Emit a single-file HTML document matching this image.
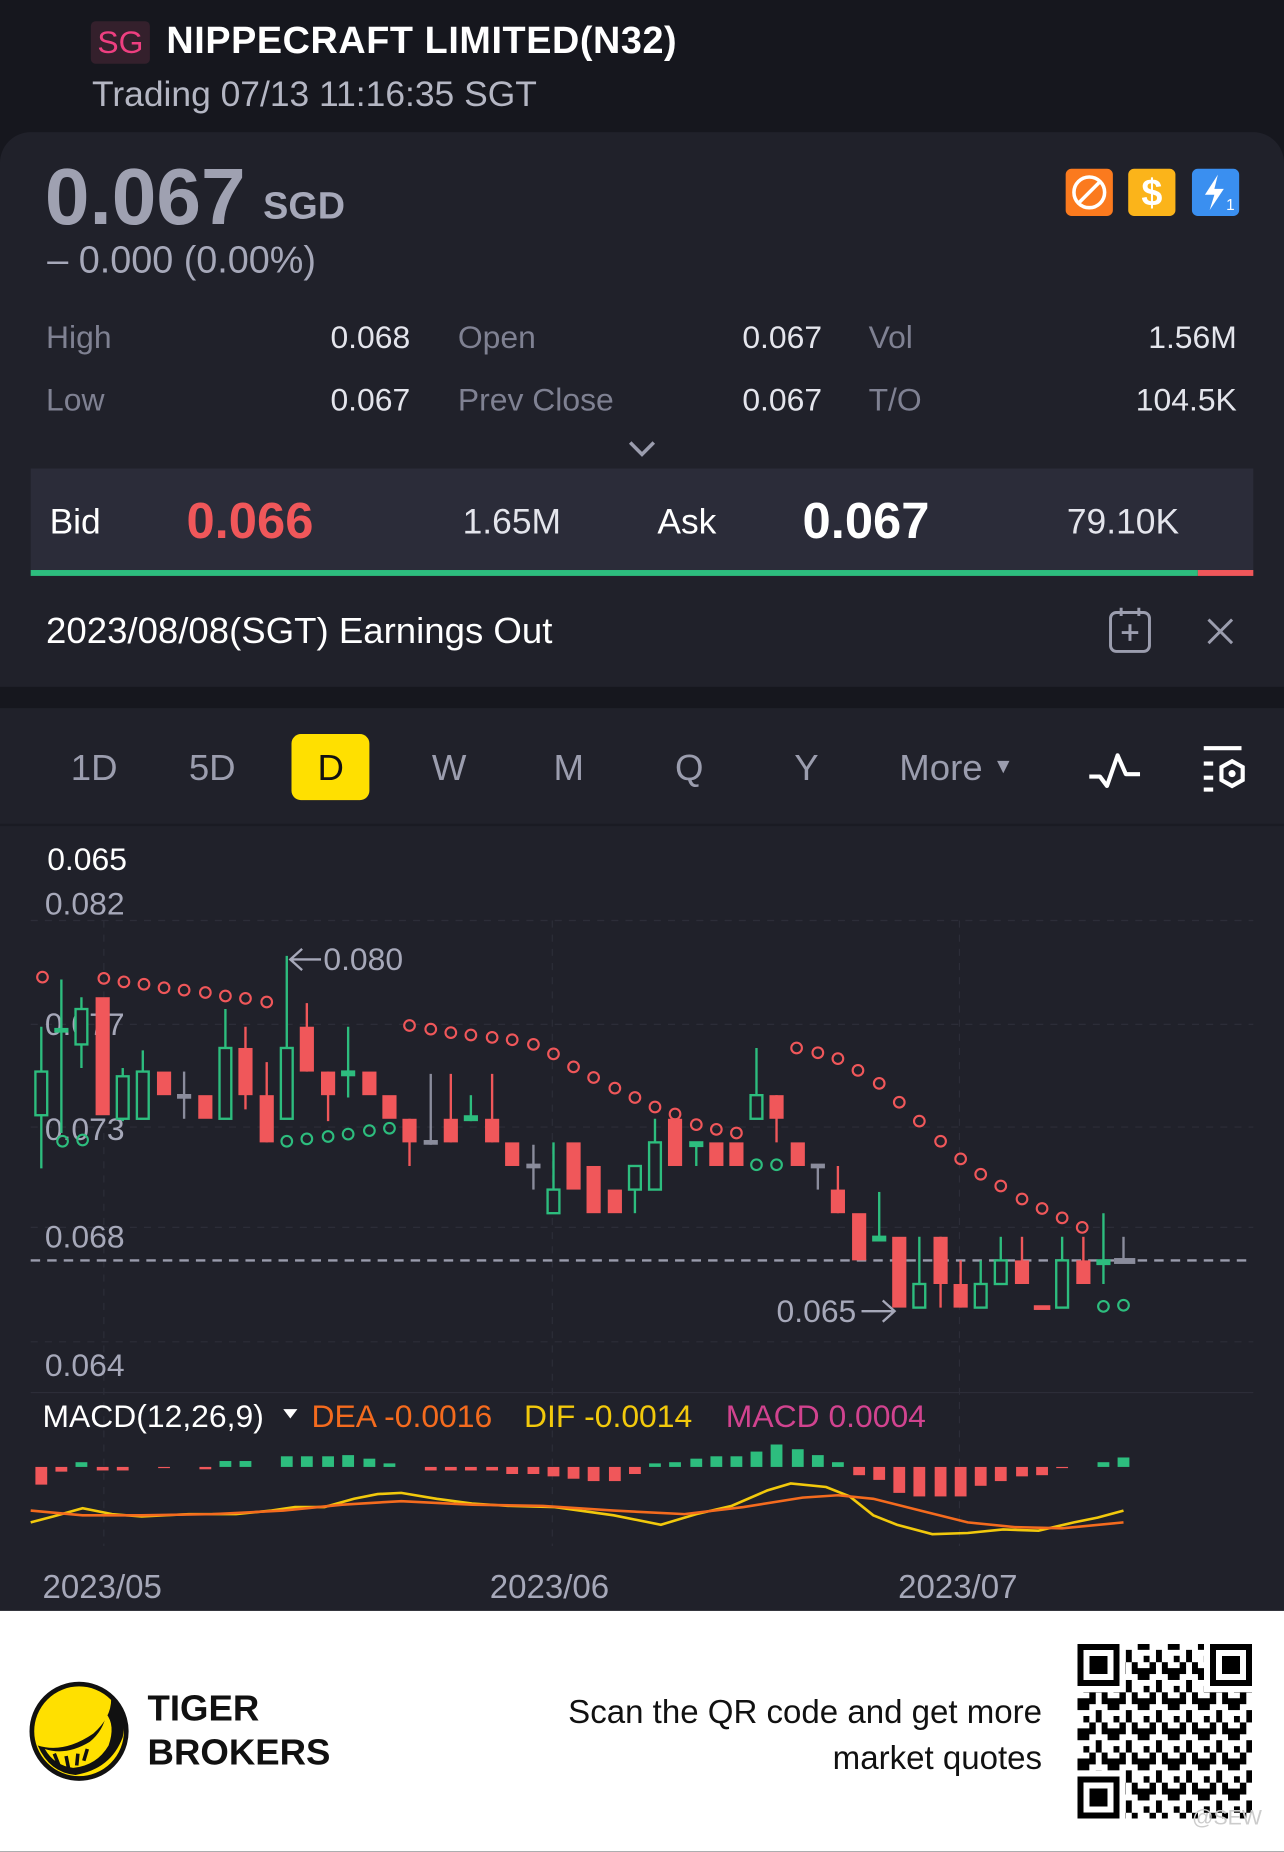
<!DOCTYPE html>
<html><head><meta charset="utf-8"><style>
*{margin:0;padding:0;box-sizing:border-box}
html,body{width:1284px;height:1851px;overflow:hidden;background:#16171e}
#s{position:absolute;left:0;top:0;width:1088px;height:1569px;transform:scale(1.180147);transform-origin:0 0;font-family:"Liberation Sans",sans-serif;background:#16171e}
.a{position:absolute;white-space:nowrap}
.lab{color:#7f8192;font-size:27px}
.val{color:#e4e5ec;font-size:27px}
</style></head><body><div id="s">
<div class="a" style="left:77px;top:18px;width:50px;height:36px;background:#34202c;border-radius:4px;color:#ee3f80;font-size:27px;line-height:36px;text-align:center">SG</div>
<div class="a" style="left:141px;top:16px;color:#fff;font-size:32px;font-weight:bold;letter-spacing:0.5px">NIPPECRAFT LIMITED(N32)</div>
<div class="a" style="left:78px;top:64px;color:#b4b6c3;font-size:30px">Trading 07/13 11:16:35 SGT</div>

<div class="a" style="left:0;top:112px;width:1088px;height:470px;background:#20212a;border-radius:26px 26px 0 0"></div>
<div class="a" style="left:38px;top:128px;color:#a6a8b9;font-size:68px;font-weight:bold;opacity:.95">0.067</div>
<div class="a" style="left:223px;top:156px;color:#a6a8b9;font-size:32px;font-weight:bold">SGD</div>
<div class="a" style="left:40px;top:202px;color:#a6a8b9;font-size:32px">– 0.000 (0.00%)</div>
<div class="a" style="left:903px;top:143px;width:40px;height:40px;background:#fb7a1e;border-radius:5px"><svg width="40" height="40"><circle cx="20" cy="20" r="13" fill="none" stroke="#fff" stroke-width="3"/><line x1="11" y1="29" x2="29" y2="11" stroke="#fff" stroke-width="3"/></svg></div>
<div class="a" style="left:956px;top:143px;width:40px;height:40px;background:#fbb41a;border-radius:5px;color:#fff;font-size:32px;font-weight:bold;text-align:center;line-height:40px">$</div>
<div class="a" style="left:1010px;top:143px;width:40px;height:40px;background:#3a8ff0;border-radius:5px"><svg width="40" height="40"><path d="M22 5 L11 22 L19 22 L15 35 L27 17 L19 17 Z" fill="#fff"/><text x="29" y="35" fill="#fff" font-size="13" font-family="Liberation Sans">1</text></svg></div>

<div class="a lab" style="left:39px;top:271px">High</div><div class="a val" style="left:280px;top:271px">0.068</div>
<div class="a lab" style="left:388px;top:271px">Open</div><div class="a val" style="left:629px;top:271px">0.067</div>
<div class="a lab" style="left:736px;top:271px">Vol</div><div class="a val" style="right:40px;top:271px">1.56M</div>
<div class="a lab" style="left:39px;top:324px">Low</div><div class="a val" style="left:280px;top:324px">0.067</div>
<div class="a lab" style="left:388px;top:324px">Prev Close</div><div class="a val" style="left:629px;top:324px">0.067</div>
<div class="a lab" style="left:736px;top:324px">T/O</div><div class="a val" style="right:40px;top:324px">104.5K</div>
<svg class="a" style="left:531px;top:372px" width="26" height="16"><path d="M3 3 L13 13 L23 3" fill="none" stroke="#9b9dae" stroke-width="3"/></svg>

<div class="a" style="left:26px;top:397px;width:1036px;height:86px;background:#2b2c39"></div>
<div class="a" style="left:26px;top:483px;width:989px;height:5px;background:#2dbd7e"></div>
<div class="a" style="left:1015px;top:483px;width:47px;height:5px;background:#f0575a"></div>
<div class="a" style="left:42px;top:426px;color:#fff;font-size:30px">Bid</div>
<div class="a" style="left:158px;top:418px;color:#f0575a;font-size:43px;font-weight:bold">0.066</div>
<div class="a" style="left:392px;top:426px;color:#e4e5ec;font-size:30px">1.65M</div>
<div class="a" style="left:557px;top:426px;color:#fff;font-size:30px">Ask</div>
<div class="a" style="left:680px;top:418px;color:#fff;font-size:43px;font-weight:bold">0.067</div>
<div class="a" style="left:904px;top:426px;color:#e4e5ec;font-size:30px">79.10K</div>

<div class="a" style="left:39px;top:517px;color:#fff;font-size:31px">2023/08/08(SGT) Earnings Out</div>
<svg class="a" style="left:938px;top:513px" width="40" height="42"><rect x="3" y="6" width="33" height="33" rx="5" fill="none" stroke="#9b9dae" stroke-width="2.5"/><line x1="12" y1="2" x2="12" y2="9" stroke="#9b9dae" stroke-width="2.5"/><line x1="27" y1="2" x2="27" y2="9" stroke="#9b9dae" stroke-width="2.5"/><path d="M19.5 16v14M12.5 23h14" stroke="#9b9dae" stroke-width="2.5"/></svg>
<svg class="a" style="left:1021px;top:522px" width="26" height="26"><path d="M3 3L23 23M23 3L3 23" stroke="#9b9dae" stroke-width="2.5"/></svg>

<div class="a" style="left:0;top:600px;width:1088px;height:765px;background:#20212a"></div>
<div class="a" style="left:0;top:698px;width:1088px;height:2px;background:#1a1b23"></div>
<div class="a" style="left:247px;top:622px;width:66px;height:56px;background:#ffe000;border-radius:8px"></div>
<div class="a" style="top:633px;left:0;width:1088px;font-size:31px;color:#9b9dae">
<span class="a" style="left:60px">1D</span><span class="a" style="left:160px">5D</span><span class="a" style="left:269px;color:#111">D</span><span class="a" style="left:366px">W</span><span class="a" style="left:469px">M</span><span class="a" style="left:572px">Q</span><span class="a" style="left:673px">Y</span><span class="a" style="left:762px">More <span style="font-size:18px;vertical-align:6px">▼</span></span></div>
<svg class="a" style="left:920px;top:636px" width="50" height="34"><path d="M3 22 L12 22 L18 30 L27 4 L34 20 L46 20" fill="none" stroke="#fff" stroke-width="3.5" stroke-linejoin="round"/></svg>
<svg class="a" style="left:1014px;top:630px" width="44" height="42"><path d="M6 4h32M6 17h8M6 29h8M6 39h8" stroke="#fff" stroke-width="3.5"/><path d="M30 15l9 5v11l-9 5-9-5V20z" fill="none" stroke="#fff" stroke-width="3.5"/><circle cx="30" cy="25.5" r="3" fill="#fff"/></svg>

<svg class="a" style="left:0;top:700px" width="1088" height="665" viewBox="0 700 1088 665" font-family="Liberation Sans">
<g stroke="#2c2d38" stroke-width="1" stroke-dasharray="6 6"><line x1="26" y1="780" x2="1062" y2="780"/><line x1="26" y1="868" x2="1062" y2="868"/><line x1="26" y1="955" x2="1062" y2="955"/><line x1="26" y1="1040" x2="1062" y2="1040"/><line x1="26" y1="1137" x2="1062" y2="1137"/><line x1="88" y1="780" x2="88" y2="1310"/><line x1="468" y1="780" x2="468" y2="1310"/><line x1="813" y1="780" x2="813" y2="1310"/></g>
<line x1="26" y1="1180" x2="1062" y2="1180" stroke="#2c2d38"/>
<line x1="26" y1="1068" x2="1062" y2="1068" stroke="#9a9cad" stroke-width="2" stroke-dasharray="8 6"/>
<g font-size="27" fill="#a6a8b9"><text x="40" y="737" fill="#fff">0.065</text><text x="38" y="775">0.082</text><text x="38" y="877">0.077</text><text x="38" y="966">0.073</text><text x="38" y="1057">0.068</text><text x="38" y="1166">0.064</text><text x="274" y="822">0.080</text><text x="658" y="1120">0.065</text></g>
<path d="M246 813h26M256 804l-10 9 10 9M730 1111h28M748 1102l10 9-10 9" fill="none" stroke="#a6a8b9" stroke-width="2"/>
<g stroke-width="2">
<g stroke="#2dbd7e" fill="#20212a">
<line x1="35" y1="870" x2="35" y2="990"/><rect x="30" y="908" width="10" height="37"/>
<line x1="52" y1="830" x2="52" y2="960"/><line x1="69" y1="845" x2="69" y2="905"/><rect x="64" y="855" width="10" height="30"/>
<line x1="104" y1="905" x2="104" y2="950"/><rect x="99" y="912" width="10" height="36"/>
<line x1="121" y1="890" x2="121" y2="948"/><rect x="116" y="908" width="10" height="40"/>
<line x1="191" y1="855" x2="191" y2="948"/><rect x="186" y="888" width="10" height="60"/>
<line x1="243" y1="810" x2="243" y2="948"/><rect x="238" y="888" width="10" height="60"/>
<line x1="295" y1="870" x2="295" y2="930"/><line x1="399" y1="928" x2="399" y2="950"/>
<line x1="469" y1="968" x2="469" y2="1028"/><rect x="464" y="1008" width="10" height="20"/>
<line x1="538" y1="988" x2="538" y2="1028"/><rect x="533" y="988" width="10" height="20"/>
<line x1="555" y1="948" x2="555" y2="1008"/><rect x="550" y="968" width="10" height="40"/>
<line x1="590" y1="968" x2="590" y2="988"/>
<line x1="641" y1="888" x2="641" y2="948"/><rect x="636" y="928" width="10" height="20"/>
<line x1="745" y1="1010" x2="745" y2="1052"/>
<line x1="779" y1="1048" x2="779" y2="1108"/><rect x="774" y="1088" width="10" height="20"/>
<line x1="831" y1="1068" x2="831" y2="1108"/><rect x="826" y="1088" width="10" height="20"/>
<line x1="848" y1="1048" x2="848" y2="1088"/><rect x="843" y="1068" width="10" height="20"/>
<line x1="900" y1="1048" x2="900" y2="1108"/><rect x="895" y="1068" width="10" height="40"/>
<line x1="935" y1="1028" x2="935" y2="1088"/>
</g>
<g fill="#2dbd7e"><rect x="46" y="871" width="12" height="4"/><rect x="289" y="907" width="12" height="5"/><rect x="393" y="945" width="12" height="5"/><rect x="584" y="967" width="12" height="5"/><rect x="739" y="1047" width="12" height="5"/><rect x="929" y="1067" width="12" height="5"/></g>
<g stroke="#f0575a"><line x1="208" y1="870" x2="208" y2="940"/><line x1="226" y1="900" x2="226" y2="968"/><line x1="260" y1="850" x2="260" y2="908"/><line x1="278" y1="908" x2="278" y2="950"/><line x1="347" y1="948" x2="347" y2="988"/><line x1="382" y1="910" x2="382" y2="968"/><line x1="417" y1="910" x2="417" y2="968"/><line x1="658" y1="928" x2="658" y2="968"/><line x1="710" y1="988" x2="710" y2="1028"/><line x1="797" y1="1048" x2="797" y2="1108"/><line x1="814" y1="1068" x2="814" y2="1108"/><line x1="866" y1="1048" x2="866" y2="1088"/><line x1="918" y1="1048" x2="918" y2="1088"/></g>
<g fill="#f0575a"><rect x="81" y="845" width="12" height="100"/><rect x="133" y="908" width="12" height="20"/><rect x="168" y="928" width="12" height="20"/><rect x="202" y="888" width="12" height="40"/><rect x="220" y="928" width="12" height="40"/><rect x="254" y="870" width="12" height="38"/><rect x="272" y="908" width="12" height="20"/><rect x="307" y="908" width="12" height="20"/><rect x="324" y="928" width="12" height="20"/><rect x="341" y="948" width="12" height="20"/><rect x="376" y="948" width="12" height="20"/><rect x="411" y="948" width="12" height="20"/><rect x="428" y="968" width="12" height="20"/><rect x="480" y="968" width="12" height="40"/><rect x="497" y="988" width="12" height="40"/><rect x="515" y="1008" width="12" height="20"/><rect x="566" y="948" width="12" height="40"/><rect x="601" y="968" width="12" height="20"/><rect x="618" y="968" width="12" height="20"/><rect x="652" y="928" width="12" height="20"/><rect x="670" y="968" width="12" height="20"/><rect x="704" y="1008" width="12" height="20"/><rect x="722" y="1028" width="12" height="40"/><rect x="756" y="1048" width="12" height="60"/><rect x="791" y="1048" width="12" height="40"/><rect x="808" y="1088" width="12" height="20"/><rect x="860" y="1068" width="12" height="20"/><rect x="876" y="1106" width="14" height="4"/><rect x="912" y="1068" width="12" height="20"/></g>
<g stroke="#8a8c9c"><line x1="156" y1="908" x2="156" y2="948"/><line x1="365" y1="910" x2="365" y2="970"/><line x1="452" y1="970" x2="452" y2="1008"/><line x1="693" y1="988" x2="693" y2="1008"/><line x1="952" y1="1048" x2="952" y2="1070"/></g>
<g fill="#8a8c9c"><rect x="150" y="927" width="12" height="4"/><rect x="359" y="966" width="12" height="4"/><rect x="446" y="986" width="12" height="4"/><rect x="687" y="986" width="12" height="4"/><rect x="944" y="1066" width="18" height="5"/></g>
</g>
<g fill="none" stroke="#f0575a" stroke-width="1.8">
<circle cx="36" cy="828" r="4.5"/><circle cx="88" cy="829" r="4.5"/><circle cx="105" cy="832" r="4.5"/><circle cx="122" cy="834" r="4.5"/><circle cx="139" cy="837" r="4.5"/><circle cx="156" cy="839" r="4.5"/><circle cx="174" cy="841" r="4.5"/><circle cx="191" cy="844" r="4.5"/><circle cx="208" cy="846" r="4.5"/><circle cx="226" cy="849" r="4.5"/>
<circle cx="347" cy="869" r="4.5"/><circle cx="365" cy="872" r="4.5"/><circle cx="382" cy="875" r="4.5"/><circle cx="399" cy="877" r="4.5"/><circle cx="417" cy="879" r="4.5"/><circle cx="434" cy="881" r="4.5"/><circle cx="452" cy="885" r="4.5"/><circle cx="469" cy="893" r="4.5"/><circle cx="486" cy="904" r="4.5"/><circle cx="503" cy="913" r="4.5"/><circle cx="521" cy="922" r="4.5"/><circle cx="538" cy="930" r="4.5"/><circle cx="555" cy="938" r="4.5"/><circle cx="572" cy="944" r="4.5"/><circle cx="590" cy="953" r="4.5"/><circle cx="607" cy="957" r="4.5"/><circle cx="624" cy="960" r="4.5"/>
<circle cx="675" cy="888" r="4.5"/><circle cx="693" cy="892" r="4.5"/><circle cx="710" cy="897" r="4.5"/><circle cx="727" cy="907" r="4.5"/><circle cx="745" cy="918" r="4.5"/><circle cx="762" cy="934" r="4.5"/><circle cx="779" cy="950" r="4.5"/><circle cx="797" cy="967" r="4.5"/><circle cx="814" cy="982" r="4.5"/><circle cx="831" cy="995" r="4.5"/><circle cx="848" cy="1005" r="4.5"/><circle cx="866" cy="1016" r="4.5"/><circle cx="883" cy="1024" r="4.5"/><circle cx="900" cy="1032" r="4.5"/><circle cx="917" cy="1040" r="4.5"/>
</g>
<g fill="none" stroke="#2dbd7e" stroke-width="1.8"><circle cx="53" cy="967" r="4.5"/><circle cx="70" cy="966" r="4.5"/><circle cx="243" cy="967" r="4.5"/><circle cx="260" cy="965" r="4.5"/><circle cx="278" cy="963" r="4.5"/><circle cx="295" cy="961" r="4.5"/><circle cx="313" cy="958" r="4.5"/><circle cx="330" cy="956" r="4.5"/><circle cx="641" cy="987" r="4.5"/><circle cx="658" cy="987" r="4.5"/><circle cx="935" cy="1107" r="4.5"/><circle cx="952" cy="1106" r="4.5"/></g>
<text x="36" y="1209" font-size="27" fill="#fff">MACD(12,26,9)</text><path d="M240 1194h12l-6 8z" fill="#fff"/>
<text x="264" y="1209" font-size="27" fill="#f46b1e">DEA -0.0016</text><text x="444" y="1209" font-size="27" fill="#f2c90c">DIF -0.0014</text><text x="615" y="1209" font-size="27" fill="#d1438f">MACD 0.0004</text>
<g fill="#f0575a"><rect x="30" y="1243" width="10" height="15"/><rect x="47" y="1243" width="10" height="4"/><rect x="82" y="1243" width="10" height="3"/><rect x="99" y="1243" width="10" height="3"/><rect x="134" y="1243" width="10" height="1"/><rect x="169" y="1243" width="10" height="2"/><rect x="360" y="1243" width="10" height="3"/><rect x="377" y="1243" width="10" height="3"/><rect x="394" y="1243" width="10" height="3"/><rect x="412" y="1243" width="10" height="3"/><rect x="429" y="1243" width="10" height="6"/><rect x="447" y="1243" width="10" height="6"/><rect x="464" y="1243" width="10" height="8"/><rect x="481" y="1243" width="10" height="10"/><rect x="498" y="1243" width="10" height="12"/><rect x="516" y="1243" width="10" height="12"/><rect x="533" y="1243" width="10" height="6"/><rect x="723" y="1243" width="10" height="7"/><rect x="740" y="1243" width="10" height="11"/><rect x="757" y="1243" width="10" height="22"/><rect x="774" y="1243" width="10" height="25"/><rect x="792" y="1243" width="10" height="25"/><rect x="809" y="1243" width="10" height="25"/><rect x="826" y="1243" width="10" height="16"/><rect x="843" y="1243" width="10" height="12"/><rect x="861" y="1243" width="10" height="8"/><rect x="878" y="1243" width="10" height="7"/><rect x="895" y="1243" width="10" height="1"/></g>
<g fill="#2dbd7e"><rect x="64" y="1239" width="10" height="4"/><rect x="186" y="1238" width="10" height="5"/><rect x="203" y="1238" width="10" height="5"/><rect x="238" y="1234" width="10" height="9"/><rect x="255" y="1234" width="10" height="9"/><rect x="273" y="1234" width="10" height="9"/><rect x="290" y="1233" width="10" height="10"/><rect x="308" y="1236" width="10" height="7"/><rect x="325" y="1240" width="10" height="3"/><rect x="550" y="1240" width="10" height="3"/><rect x="567" y="1239" width="10" height="4"/><rect x="585" y="1236" width="10" height="7"/><rect x="602" y="1234" width="10" height="9"/><rect x="619" y="1234" width="10" height="9"/><rect x="636" y="1230" width="10" height="13"/><rect x="653" y="1224" width="10" height="19"/><rect x="671" y="1228" width="10" height="15"/><rect x="688" y="1233" width="10" height="10"/><rect x="705" y="1239" width="10" height="4"/><rect x="930" y="1239" width="10" height="4"/><rect x="947" y="1235" width="10" height="8"/></g>
<polyline fill="none" stroke="#f2c90c" stroke-width="2.2" points="26,1290 45,1285 70,1278 95,1283 120,1285 160,1283 200,1283 230,1280 250,1277 275,1277 300,1270 320,1266 340,1265 370,1270 400,1274 430,1276 470,1277 520,1284 560,1292 590,1283 620,1276 650,1263 670,1257 700,1260 720,1268 740,1284 760,1292 790,1300 820,1299 850,1296 880,1297 910,1290 930,1286 952,1280"/>
<polyline fill="none" stroke="#f46b1e" stroke-width="2.2" points="26,1280 70,1284 120,1284 180,1283 240,1280 290,1275 340,1272 400,1275 460,1276 520,1280 580,1283 630,1277 680,1269 710,1267 740,1270 780,1280 820,1290 860,1294 900,1295 952,1290"/>
<g font-size="28" fill="#a6a8b9"><text x="36" y="1354">2023/05</text><text x="415" y="1354">2023/06</text><text x="761" y="1354">2023/07</text></g>
</svg>

<div class="a" style="left:0;top:1365px;width:1088px;height:204px;background:#fff"></div>
<svg class="a" style="left:24px;top:1424px" width="86" height="86"><circle cx="43" cy="43" r="40" fill="#ffe000" stroke="#111" stroke-width="4"/><path d="M8 55 Q30 62 55 45 Q72 30 70 12 Q85 25 80 48 Q70 75 40 80 Q18 78 8 55Z" fill="#111"/><path d="M14 58 Q32 64 52 52 Q64 42 66 28 Q74 38 68 55 Q58 72 38 74 Q22 72 14 58Z" fill="#ffe000"/><path d="M22 62l4 10M32 64l2 10M42 62l-1 10M50 58l-3 10" stroke="#111" stroke-width="3"/></svg>
<div class="a" style="left:125px;top:1429px;color:#111;font-size:31px;font-weight:bold;line-height:37px">TIGER<br>BROKERS</div>
<div class="a" style="right:205px;top:1431px;color:#111;font-size:28px;line-height:39px;text-align:right">Scan the QR code and get more<br>market quotes</div>
<svg class="a" style="left:913px;top:1393px" width="148" height="148" viewBox="0 0 29 29" shape-rendering="crispEdges">
<defs><pattern id="q" width="5" height="5" patternUnits="userSpaceOnUse"><rect x="0" y="0" width="2" height="1"/><rect x="3" y="1" width="1" height="2"/><rect x="1" y="2" width="1" height="1"/><rect x="0" y="4" width="3" height="1"/><rect x="4" y="3" width="1" height="2"/><rect x="2" y="3" width="1" height="1"/></pattern></defs>
<rect width="29" height="29" fill="url(#q)"/>
<g><rect x="0" y="0" width="8" height="8" fill="#fff"/><rect x="21" y="0" width="8" height="8" fill="#fff"/><rect x="0" y="21" width="8" height="8" fill="#fff"/>
<path d="M0 0h7v7h-7zM1 1v5h5v-5zM2 2h3v3h-3zM22 0h7v7h-7zM23 1v5h5v-5zM24 2h3v3h-3zM0 22h7v7h-7zM1 23v5h5v-5zM2 24h3v3h-3z" fill="#000" fill-rule="evenodd"/></g>
</svg>
<div class="a" style="left:1010px;top:1530px;color:#ccc;font-size:18px">@SEW</div>
</div></body></html>
